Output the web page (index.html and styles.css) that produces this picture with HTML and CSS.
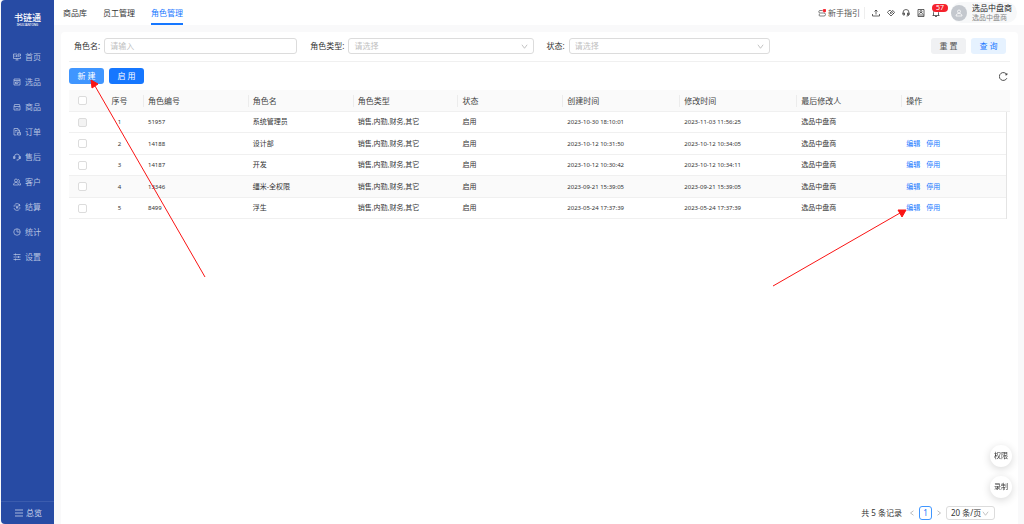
FILE: index.html
```html
<!DOCTYPE html>
<html lang="zh-CN">
<head>
<meta charset="utf-8">
<title>角色管理</title>
<link rel="stylesheet" href="styles.css">
</head>
<body>
<div class="app">
  <aside class="sidebar">
    <div class="logo">书链通<small>SHULIANTONG</small></div>
    <nav class="menu">
      <a href="#"><svg class="icon" viewBox="0 0 16 16"><path d="M8 2H1v9h14V8M5 14h6M8 11v3M4 5v3M7 4v4M10 6v2M10 2h5v4h-5z"/></svg>首页</a>
      <a href="#"><svg class="icon" viewBox="0 0 16 16"><path d="M2 2h12v12H2zM2 5h12M5 8h6l-3 4zM5 8v4"/></svg>选品</a>
      <a href="#"><svg class="icon" viewBox="0 0 16 16"><path d="M3 3h10l1 4v7H2V7zM2 7h12M5 10c2 2 4 2 6 0"/></svg>商品</a>
      <a href="#"><svg class="icon" viewBox="0 0 16 16"><path d="M7 14H2V1h8v6M4 5h4M4 8h3M10 4h3v4M9 9h6v5H9zM11 11h2"/></svg>订单</a>
      <a href="#"><svg class="icon" viewBox="0 0 16 16"><path d="M3 10V7a5 5 0 0 1 10 0v3c0 3-2 4-5 4M3 7H1v4h3V7M13 7h2v4h-3V7M8 13v2"/></svg>售后</a>
      <a href="#"><svg class="icon" viewBox="0 0 16 16"><circle cx="6" cy="5" r="3"/><path d="M1 14c0-7 10-7 10 0zM10 3c4 0 4 5 1 5 3 1 4 3 4 6h-3"/></svg>客户</a>
      <a href="#"><svg class="icon" viewBox="0 0 16 16"><path d="M2 10a6 6 0 0 0 11 2M14 6A6 6 0 0 0 3 4M1 6h4M11 10h4M6 5l2 3 2-3M8 8v4M6 9h4M13 2v4h-3"/></svg>结算</a>
      <a href="#"><svg class="icon" viewBox="0 0 16 16"><circle cx="8" cy="8" r="6.5"/><path d="M8 2v6h6"/></svg>统计</a>
      <a href="#"><svg class="icon" viewBox="0 0 16 16"><path d="M1 3h14M1 8h14M1 13h14M5 1v4M11 6v4M5 11v4"/></svg>设置</a>
    </nav>
    <a class="overview" href="#"><svg class="icon" viewBox="0 0 16 16"><path d="M0 2h16M0 8h16M0 14h16"/></svg>总览</a>
  </aside>

  <div class="page">
    <header class="topbar">
      <nav class="tabs">
        <a href="#">商品库</a>
        <a href="#">员工管理</a>
        <a href="#" class="active">角色管理</a>
      </nav>
      <div class="tools">
        <a class="guide" href="#"><svg class="icon" viewBox="0 0 16 16"><path d="M9 3H4a2 2 0 0 0 0 5h8a3 3 0 0 1 0 6H4a2 2 0 0 1 0-4"/><circle class="dot" cx="13" cy="3" r="3"/></svg>新手指引</a>
        <button type="button" aria-label="上传"><svg class="icon" viewBox="0 0 16 16"><path d="M8 11V2M5 5l3-3 3 3M1 10v4h14v-4"/></svg></button>
        <button type="button" aria-label="合作"><svg class="icon" viewBox="0 0 16 16"><path d="M8 14L1 7l3-4h3l2 2 3-2 3 4zM9 5L6 8l2 1 3-2 3 3"/></svg></button>
        <button type="button" aria-label="客服"><svg class="icon" viewBox="0 0 16 16"><path d="M2 10V7a6 6 0 0 1 12 0v3c0 3-2 4-5 4M2 8h3v4H2zM11 8h3v4h-3z"/></svg></button>
        <button type="button" aria-label="名片"><svg class="icon" viewBox="0 0 16 16"><path d="M2 1h12v14H2zM2 12h12M5 10c0-4 6-4 6 0"/><circle cx="8" cy="5" r="2"/></svg></button>
        <button type="button" class="bell" aria-label="通知"><svg class="icon" viewBox="0 0 16 16"><path d="M1 13h14M3 13V7a5 5 0 0 1 10 0v6M6 15h4"/></svg><span class="badge">57</span></button>
        <div class="user">
          <span class="avatar"><svg class="icon" viewBox="0 0 16 16"><circle cx="8" cy="5" r="3"/><path d="M2 14c0-7 12-7 12 0z"/></svg></span>
          <div class="who">选品中盘商<small>选品中盘商</small></div>
        </div>
      </div>
    </header>

    <main class="card">
      <form class="filters">
        <div class="field"><label for="name">角色名:</label><input id="name" type="text" placeholder="请输入"></div>
        <div class="field"><label for="type">角色类型:</label><span class="select"><select id="type"><option>请选择</option></select><svg class="chevron" viewBox="0 0 16 16"><path d="M2 4l6 8 6-8"/></svg></span></div>
        <div class="field"><label for="state">状态:</label><span class="select"><select id="state"><option>请选择</option></select><svg class="chevron" viewBox="0 0 16 16"><path d="M2 4l6 8 6-8"/></svg></span></div>
        <div class="actions"><button type="reset" class="btn">重 置</button><button type="button" class="btn query">查 询</button></div>
      </form>

      <div class="toolbar">
        <button type="button" class="btn create">新 建</button>
        <button type="button" class="btn enable">启 用</button>
        <button type="button" class="refresh" aria-label="刷新"><svg viewBox="0 0 16 16"><path d="M14 5A7 7 0 1 0 14 11M14 2v3h-3"/></svg></button>
      </div>

      <table class="roles">
        <colgroup><col class="c-check"><col class="c-index"><col><col><col><col><col class="c-time"><col class="c-time"><col><col><col class="c-end"></colgroup>
        <thead>
          <tr><th><input type="checkbox" aria-label="全选"></th><th>序号</th><th>角色编号</th><th>角色名</th><th>角色类型</th><th>状态</th><th>创建时间</th><th>修改时间</th><th>最后修改人</th><th>操作</th><th></th></tr>
        </thead>
        <tbody>
          <tr><td><input type="checkbox" aria-label="选择 1" disabled></td><td class="num">1</td><td class="num">51957</td><td>系统管理员</td><td>销售,内勤,财务,其它</td><td>启用</td><td class="num">2023-10-30 18:10:01</td><td class="num">2023-11-03 11:56:25</td><td>选品中盘商</td><td></td><td></td></tr>
          <tr><td><input type="checkbox" aria-label="选择 2"></td><td class="num">2</td><td class="num">14188</td><td>设计部</td><td>销售,内勤,财务,其它</td><td>启用</td><td class="num">2023-10-12 10:31:50</td><td class="num">2023-10-12 10:34:05</td><td>选品中盘商</td><td><a href="#">编辑</a><a href="#">停用</a></td><td></td></tr>
          <tr><td><input type="checkbox" aria-label="选择 3"></td><td class="num">3</td><td class="num">14187</td><td>开发</td><td>销售,内勤,财务,其它</td><td>启用</td><td class="num">2023-10-12 10:30:42</td><td class="num">2023-10-12 10:34:11</td><td>选品中盘商</td><td><a href="#">编辑</a><a href="#">停用</a></td><td></td></tr>
          <tr class="hovered"><td><input type="checkbox" aria-label="选择 4"></td><td class="num">4</td><td class="num">13346</td><td>缰米-全权限</td><td>销售,内勤,财务,其它</td><td>启用</td><td class="num">2023-09-21 15:39:05</td><td class="num">2023-09-21 15:39:05</td><td>选品中盘商</td><td><a href="#">编辑</a><a href="#">停用</a></td><td></td></tr>
          <tr><td><input type="checkbox" aria-label="选择 5"></td><td class="num">5</td><td class="num">8499</td><td>浮生</td><td>销售,内勤,财务,其它</td><td>启用</td><td class="num">2023-05-24 17:37:39</td><td class="num">2023-05-24 17:37:39</td><td>选品中盘商</td><td><a href="#">编辑</a><a href="#">停用</a></td><td></td></tr>
        </tbody>
      </table>

      <footer class="pager">
        <span>共 5 条记录</span>
        <button type="button" class="step" aria-label="上一页"><svg viewBox="0 0 16 16"><path d="M12 2L4 8l8 6"/></svg></button>
        <button type="button" class="current">1</button>
        <button type="button" class="step" aria-label="下一页"><svg viewBox="0 0 16 16"><path d="M4 2l8 6-8 6"/></svg></button>
        <span class="select size"><select aria-label="每页条数"><option>20 条/页</option></select><svg class="chevron" viewBox="0 0 16 16"><path d="M2 4l6 8 6-8"/></svg></span>
      </footer>
    </main>
  </div>
</div>

<div class="floats">
  <button type="button">权限</button>
  <button type="button">录制</button>
</div>

<svg class="arrows" aria-hidden="true">
  <path class="line" d="M205 277L95 86M773 286L900 213"/>
  <path class="head" d="M91 80L98 84L92 88ZM906 210L902 217L898 210Z"/>
</svg>
</body>
</html>
```

FILE: styles.css
```css
* {
  box-sizing: border-box;
}

body {
  margin: 0;
  background: #f9f9fa;
  color: #333;
  font: 8px/12px "Noto Sans", "Noto Sans CJK SC", sans-serif;
}

a {
  color: inherit;
  text-decoration: none;
}

button,
input,
select {
  margin: 0;
  border: 0;
  background: none;
  color: inherit;
  font: inherit;
}

button {
  padding: 0;
}

svg {
  fill: none;
  stroke: currentColor;
}

.icon {
  flex: none;
  width: 8px;
  height: 8px;
  stroke-width: 1.5;
}

.app {
  display: flex;
  min-height: 100vh;
  padding-left: 1px;
}

/* Sidebar */
.sidebar {
  display: flex;
  flex: none;
  flex-direction: column;
  width: 53px;
  border-radius: 4px 0 0 4px;
  background: #274ba4;
  color: #b4c1e0;
}

.logo {
  padding: 13px 0 17px;
  color: #fff;
  font-size: 9px;
  font-weight: 500;
  line-height: 10px;
  text-align: center;
}

.logo small {
  display: block;
  font-size: 3px;
  line-height: 4px;
}

.menu a,
.overview {
  display: flex;
  align-items: center;
  gap: 4px;
  height: 25px;
  padding-left: 12px;
}

.overview {
  gap: 3px;
  height: 23px;
  margin-top: auto;
  padding-left: 14px;
  border-top: 1px solid #3b5cae;
  color: #d3dbee;
}

/* Top bar */
.page {
  display: flex;
  flex: 1;
  flex-direction: column;
  min-width: 0;
}

.topbar {
  display: flex;
  justify-content: space-between;
  height: 25px;
  padding: 0 7px 0 9px;
  background: #fff;
}

.tabs {
  display: flex;
  gap: 16px;
  line-height: 25px;
}

.tabs .active {
  border-bottom: 2px solid #1677ff;
  color: #1677ff;
}

.tools {
  display: flex;
  align-items: center;
  gap: 7px;
}

.tools button {
  display: flex;
}

.guide {
  display: flex;
  align-items: center;
  gap: 2px;
  padding-right: 4px;
  border-right: 1px solid #eee;
  color: #555;
}

.dot {
  fill: #f5222d;
  stroke: #f5222d;
}

.bell {
  position: relative;
}

.badge {
  position: absolute;
  top: -5px;
  left: 0;
  width: 16px;
  border-radius: 4px;
  background: #f5222d;
  color: #fff;
  font-size: 7px;
  line-height: 8px;
  text-align: center;
}

.user {
  display: flex;
  align-items: center;
  gap: 5px;
  height: 21px;
  margin-left: 4px;
  padding-right: 5px;
  border-radius: 11px;
  background: #f7f8f9;
}

.avatar {
  display: flex;
  align-items: center;
  justify-content: center;
  width: 16px;
  height: 16px;
  border-radius: 50%;
  background: #c4c8ce;
  color: #fff;
}

.who {
  color: #222;
  line-height: 10px;
}

.who small {
  display: block;
  color: #888;
  font-size: 7px;
}

/* Content card */
.card {
  display: flex;
  flex: 1;
  flex-direction: column;
  margin: 7px 6px 0 7px;
  padding: 0 8px;
  border-radius: 4px 4px 0 0;
  background: #fff;
}

.filters {
  display: grid;
  grid-template-columns: repeat(4, 1fr);
  gap: 13px;
  padding: 6px 4px 7px 5px;
  border-bottom: 1px solid #f0f0f0;
}

.field {
  display: flex;
  align-items: center;
  gap: 4px;
}

.field input,
.select {
  flex: 1;
  min-width: 0;
  height: 16px;
  border: 1px solid #dcdcdc;
  border-radius: 3px;
}

.field input {
  padding: 0 5px 1px;
}

.field input::placeholder {
  color: #bfbfbf;
}

.select {
  display: flex;
  align-items: center;
  padding-right: 5px;
}

.select select {
  flex: 1;
  min-width: 0;
  height: 14px;
  padding: 0 5px;
  appearance: none;
  color: #bfbfbf;
}

.chevron {
  width: 7px;
  height: 7px;
  color: #bbb;
  stroke-width: 2;
}

.actions {
  display: flex;
  justify-content: flex-end;
  gap: 5px;
}

.btn {
  width: 35px;
  height: 16px;
  border-radius: 3px;
  background: #f0f1f3;
  color: #555;
}

.query {
  background: #e6f2ff;
  color: #1677ff;
}

.toolbar {
  display: flex;
  align-items: center;
  gap: 5px;
  padding: 6px 2px 6px 0;
}

.create {
  background: #4096ff;
  color: #fff;
}

.enable {
  background: #1677ff;
  color: #fff;
}

.refresh {
  display: flex;
  margin-left: auto;
}

.refresh svg {
  width: 9px;
  height: 9px;
  stroke-width: 1.5;
}

/* Role table */
.roles {
  width: 100%;
  border-spacing: 0;
  font-size: 7px;
  line-height: 10px;
  table-layout: fixed;
}

.c-check {
  width: 27px;
}

.c-index {
  width: 47px;
}

.c-time {
  width: 117px;
}

.c-end {
  width: 4px;
}

.roles th,
.roles td {
  height: 21px;
  padding: 0 5px;
  border-bottom: 1px solid #f0f0f0;
  text-align: left;
  white-space: nowrap;
}

.roles tbody tr:nth-child(even) td {
  height: 22px;
}

.roles th {
  height: 22px;
  background: linear-gradient(#ececec, #ececec) left center / 1px 12px no-repeat #fafafa;
  color: #444;
  font-size: 8px;
  font-weight: 400;
}

.roles th:nth-child(-n + 2),
.roles th:last-child {
  background: #fafafa;
}

.roles tr > :nth-child(-n + 2) {
  padding: 0;
  text-align: center;
}

.roles tr > :last-child {
  padding: 0;
}

.roles td:last-child {
  border-bottom: 0;
  border-left: 1px solid #e4e4e4;
  background: #fff;
}

.roles .num {
  font-size: 6px;
}

.roles .hovered {
  background: #fafafa;
}

.roles td a {
  margin-right: 6px;
  color: #1677ff;
}

.roles input {
  display: block;
  width: 9px;
  height: 9px;
  margin: 0 auto;
  border: 1px solid #dcdcdc;
  border-radius: 2px;
  appearance: none;
  background: #fff;
}

.roles input:disabled {
  background: #f3f3f3;
}

/* Pagination */
.pager {
  display: flex;
  align-items: center;
  justify-content: flex-end;
  gap: 4px;
  margin-top: auto;
  padding: 0 15px 4px 0;
}

.step {
  display: flex;
  color: #aaa;
}

.step:first-of-type {
  margin-left: 3px;
}

.step svg {
  width: 6px;
  height: 6px;
  stroke-width: 2;
}

.current {
  width: 13px;
  height: 14px;
  border: 1px solid #4096ff;
  border-radius: 3px;
  color: #1677ff;
  line-height: 10px;
}

.size {
  flex: none;
  width: 49px;
  height: 14px;
}

.size select {
  height: 12px;
  padding: 0 0 0 4px;
  color: #333;
}

/* Floating shortcuts */
.floats {
  position: fixed;
  right: 12px;
  bottom: 26px;
  display: grid;
  gap: 9px;
}

.floats button {
  width: 22px;
  height: 22px;
  border-radius: 50%;
  background: #fff;
  box-shadow: 0 2px 8px rgba(0, 0, 0, 0.16);
  font-size: 7px;
}

/* Annotation arrows */
.arrows {
  position: absolute;
  top: 0;
  left: 0;
  width: 100%;
  height: 100%;
  pointer-events: none;
}

.arrows .line {
  stroke: #fa1414;
}

.arrows .head {
  fill: #fa1414;
  stroke: #fa1414;
}
```
